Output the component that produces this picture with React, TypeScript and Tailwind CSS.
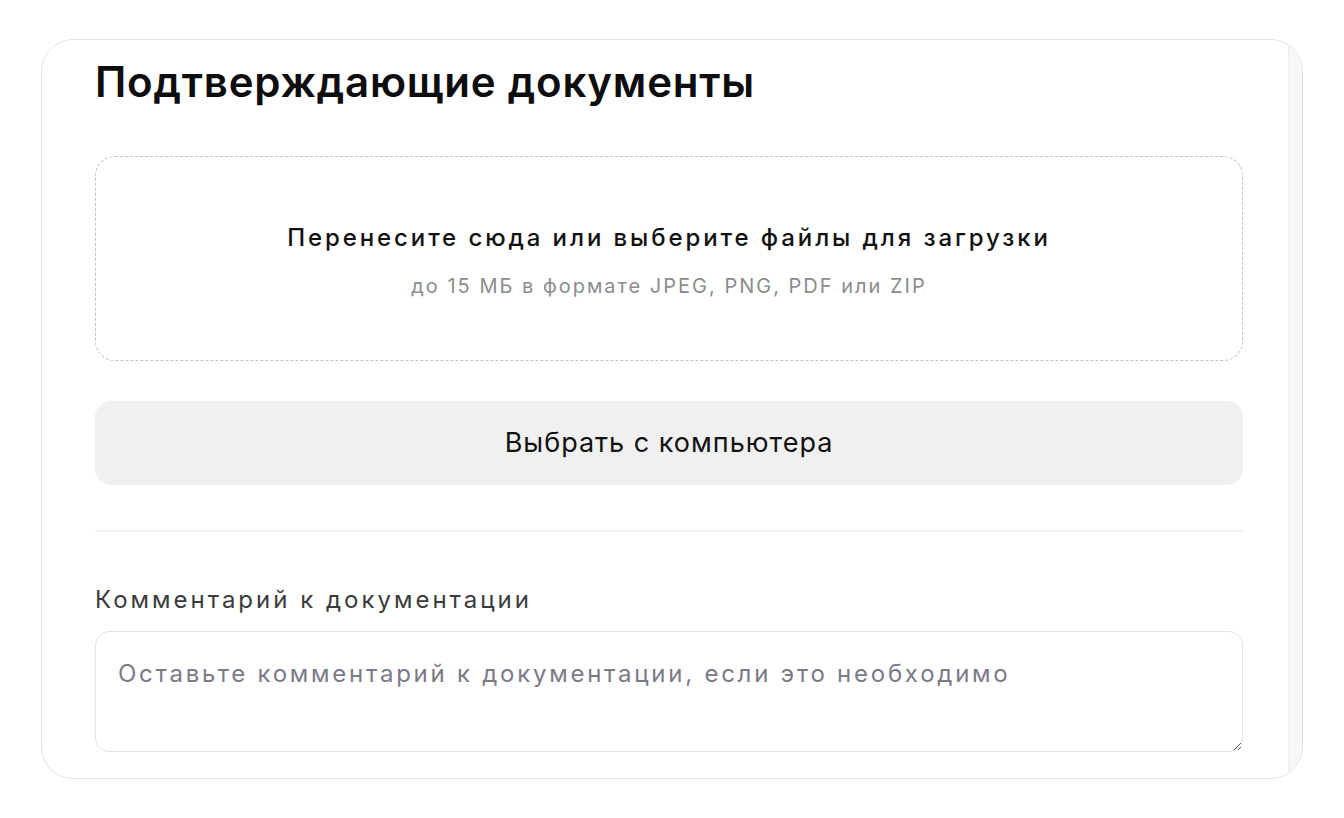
import React, { useState } from 'react';

const font = { fontFamily: 'Inter, "Noto Sans", sans-serif' };

export default function App() {
  const [comment, setComment] = useState('');

  return (
    <div className="w-full h-[818px] bg-white pt-[39px] pl-[41px]" style={font}>
      <div className="w-[1262px] h-[740px] rounded-[32px] border border-[#e4e4e6] overflow-hidden flex">
        {/* Content */}
        <div className="flex-1 pt-[17px] pl-[53px] pr-[45px]">
          <h2 className="text-[42px] leading-[50px] font-semibold text-[#0d0d0d] tracking-[0.8px] whitespace-nowrap">
            Подтверждающие документы
          </h2>

          {/* Drop zone */}
          <div className="mt-[49px] h-[205px] rounded-[20px] border border-dashed border-[#c2c2c4] flex flex-col items-center justify-center">
            <p className="mt-[4px] text-[24px] leading-[32px] font-medium text-[#111] tracking-[2.9px] whitespace-nowrap">
              Перенесите сюда или выберите файлы для загрузки
            </p>
            <p className="mt-[19px] text-[20px] leading-[26px] text-[#8c8c8e] tracking-[2px] whitespace-nowrap">
              до 15 МБ в формате JPEG, PNG, PDF или ZIP
            </p>
          </div>

          <button
            type="button"
            className="mt-[40px] w-full h-[84px] rounded-[16px] bg-[#f0f0f0] text-[27px] text-[#111] tracking-[1px]"
          >
            Выбрать с компьютера
          </button>

          <div className="mt-[45px] h-[2px] bg-[#f3f3f3]" />

          {/* Comment */}
          <label className="block mt-[52px] text-[24px] leading-[32px] text-[#3b3b3d] tracking-[3px]">
            Комментарий к документации
          </label>
          <textarea
            value={comment}
            onChange={(e) => setComment(e.target.value)}
            placeholder="Оставьте комментарий к документации, если это необходимо"
            className="mt-[15px] block w-full h-[121px] rounded-[14px] border border-[#e4e4e6] px-[22px] pt-[24px] text-[24px] leading-[36px] tracking-[2.75px] text-[#111] placeholder:text-[#7b7a87] outline-none"
          />
        </div>

        {/* Scrollbar track */}
        <div className="w-[14px] bg-[#f7f7f8] border-l border-[#f0f0f2]" />
      </div>
    </div>
  );
}
